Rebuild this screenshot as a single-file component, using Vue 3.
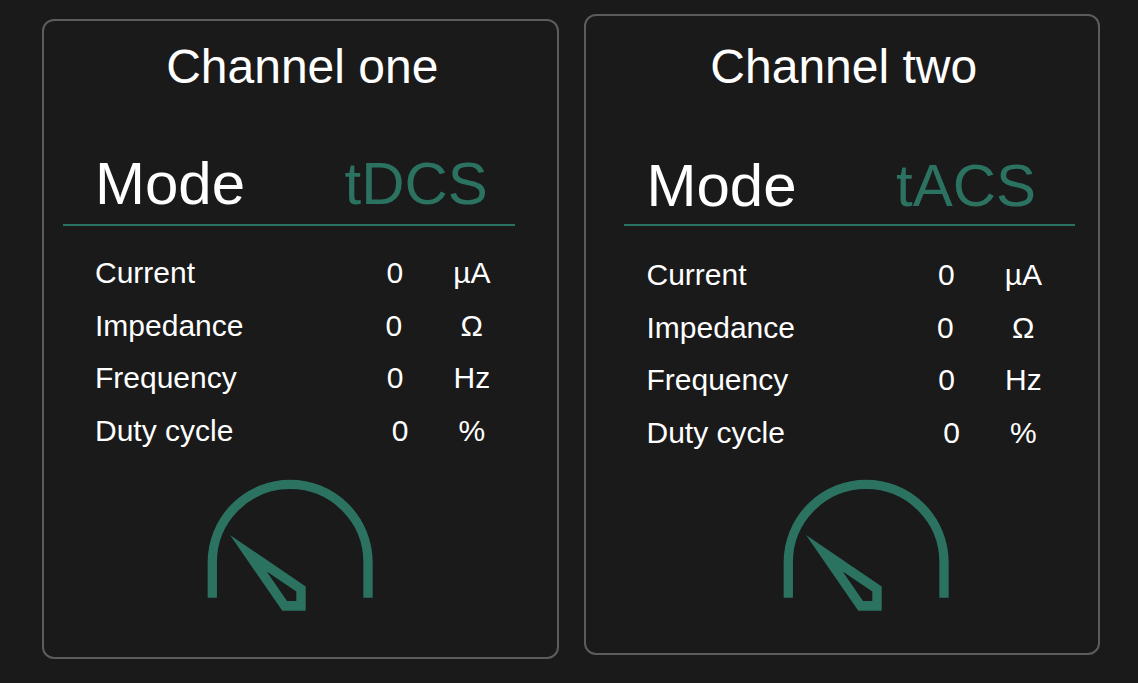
<script setup>
// Units are padded with spaces so each value/unit pair is spread around the column's centre.
const readings = [
  { label: 'Current', text: '0      µA' },
  { label: 'Impedance', text: '0       Ω ' },
  { label: 'Frequency', text: '0      Hz' },
  { label: 'Duty cycle', text: '0      %' },
]

const channels = [
  { id: 'one', title: 'Channel one', mode: 'tDCS' },
  { id: 'two', title: 'Channel two', mode: 'tACS' },
]
</script>

<template>
  <main class="channels">
    <section
      v-for="channel in channels"
      :key="channel.id"
      class="card"
      :class="`card-${channel.id}`"
      :aria-labelledby="`title-${channel.id}`"
    >
      <h1 :id="`title-${channel.id}`" class="title">{{ channel.title }}</h1>

      <div class="mode">
        <span>Mode</span>
        <span class="mode-value">{{ channel.mode }}</span>
      </div>

      <hr class="rule" />

      <dl class="readings">
        <div v-for="reading in readings" :key="reading.label" class="reading">
          <dt>{{ reading.label }}</dt>
          <dd>{{ reading.text }}</dd>
        </div>
      </dl>

      <div class="gauge">
        <svg width="166" height="132" viewBox="0 0 166 132" aria-hidden="true">
          <path
            d="M5.3 118.7V83.3A77.85 77.85 0 0 1 161 83.3V118.7"
            fill="none"
            stroke="currentColor"
            stroke-width="9.3"
          />
          <path
            d="M23 56L98.7 107.5V131.7H75.3ZM59.7 92.4L80 122H89.3V112.5Z"
            fill="currentColor"
            fill-rule="evenodd"
          />
        </svg>
      </div>
    </section>
  </main>
</template>

<style>
body {
  margin: 0;
  background: #1a1a1a;
}
</style>

<style scoped>
.channels {
  display: grid;
  grid-template-columns: 1fr 1fr;
  align-items: start;
  gap: 25px;
  padding: 14px 38px 24px 42px;
  color: #fff;
  font-family: "Liberation Sans", Arial, sans-serif;
}

.card {
  border: 2px solid #5c5c5c;
  border-radius: 12px;
}

.card-one {
  margin-top: 5px;
  padding: 18px 0 46px;
}

.card-two {
  padding: 23px 0 42px;
}

.title {
  margin: 0;
  padding-left: 4px;
  font-size: 48px;
  font-weight: 400;
  line-height: 56px;
  text-align: center;
}

.mode,
.reading {
  display: grid;
  grid-template-columns: 1fr 188px;
}

.card-one .mode,
.card-one .readings {
  padding: 0 24px 0 51px;
}

.card-two .mode,
.card-two .readings {
  padding: 0 14px 0 61px;
}

.mode {
  font-size: 60px;
  line-height: 66px;
}

.card-one .mode {
  margin: 56px 0 7px;
}

.card-two .mode {
  margin: 58px 0 5px;
}

.mode-value {
  color: #2b7261;
}

.rule {
  height: 2px;
  border: 0;
  background: #287361;
}

.card-one .rule {
  margin: 0 42px 21px 19px;
}

.card-two .rule {
  margin: 0 23px 23px 38px;
}

.readings {
  display: grid;
  grid-template-rows: repeat(4, 1fr);
  height: 210px;
  margin: 0;
  font-size: 30px;
}

.reading {
  align-items: center;
}

.reading dd {
  margin: 0;
  text-align: center;
  white-space: pre;
}

.gauge {
  display: flex;
  justify-content: center;
  color: #2b7261;
}

.card-one .gauge {
  margin-top: 22px;
  padding-right: 20px;
}

.card-two .gauge {
  margin-top: 20px;
  padding-left: 48px;
}
</style>
